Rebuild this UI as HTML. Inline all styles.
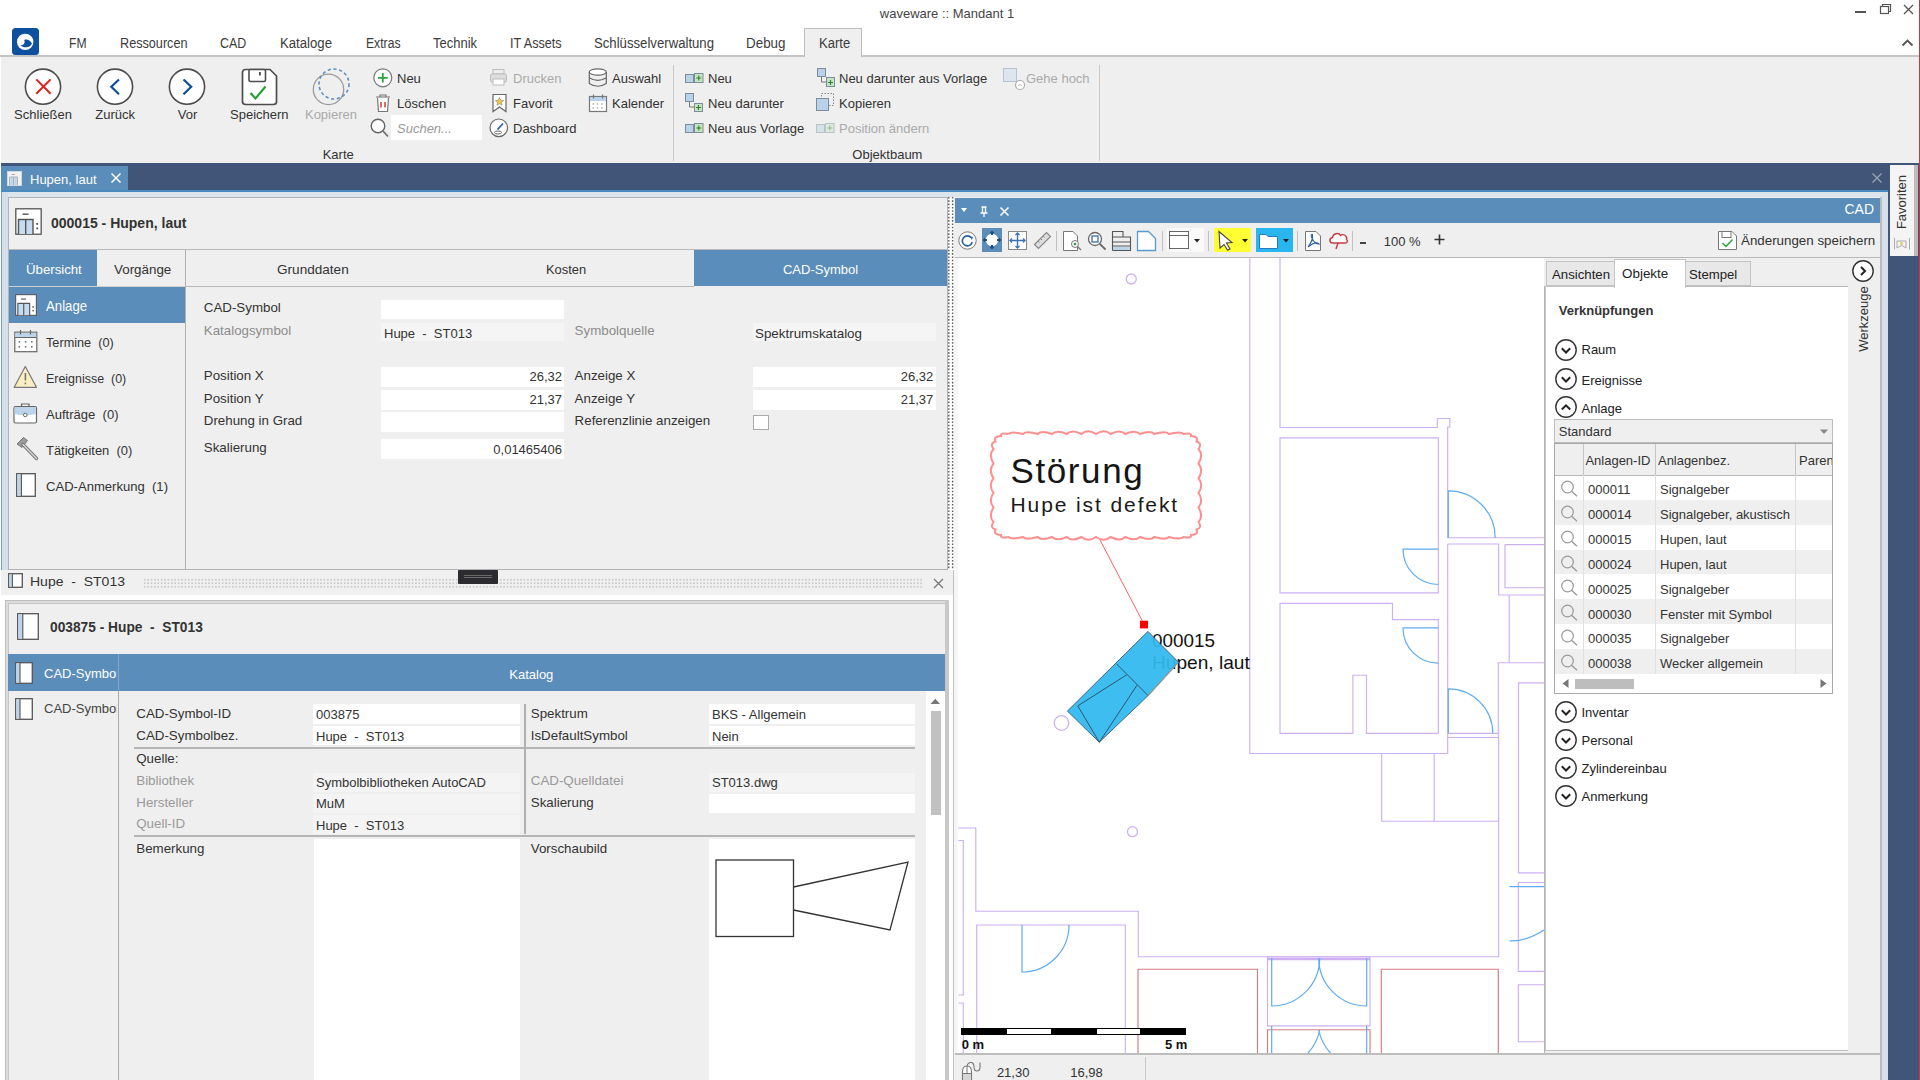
<!DOCTYPE html><html><head><meta charset="utf-8"><title>waveware</title><style>
html,body{margin:0;padding:0;}
body{width:1920px;height:1080px;overflow:hidden;position:relative;background:#fff;font-family:"Liberation Sans", sans-serif;}
.t{position:absolute;white-space:pre;}
.r{position:absolute;}
svg.r{overflow:visible;}
</style></head><body>
<div class="r" style="left:0px;top:0px;width:1920px;height:57px;background:#ffffff;"></div>
<div class="t" style="left:447.00px;top:7.20px;font-size:13px;line-height:13px;color:#444;width:1000px;text-align:center;">waveware :: Mandant 1</div>
<svg class="r" style="left:1850px;top:0px;" width="70" height="56" viewBox="0 0 70 56"><rect x="5" y="11" width="11" height="2" fill="#555"/><rect x="30.5" y="6.5" width="8" height="7" fill="none" stroke="#555" stroke-width="1.2"/><path d="M32.5 6.5 V4.5 H40.5 V11.5 H38.5" fill="none" stroke="#555" stroke-width="1.2"/><path d="M54 5 L63 14 M63 5 L54 14" stroke="#555" stroke-width="1.3"/><path d="M52.5 45.5 L57.5 40.5 L62.5 45.5" fill="none" stroke="#555" stroke-width="1.8"/></svg>
<svg class="r" style="left:12px;top:28px;" width="27" height="27" viewBox="0 0 27 27"><rect x="0" y="0" width="27" height="27" rx="3.5" fill="#0d50a0"/><circle cx="13.2" cy="13.9" r="8.2" fill="#fff"/><path d="M8.4 17.4 C11.6 17.2 13.6 15.2 12.2 12 C15.2 10.6 18.6 12.6 20 15.6 C18.6 19.4 13.2 20.6 8.4 17.4 Z" fill="#0d50a0"/></svg>
<div class="r" style="left:804px;top:28px;width:58px;height:30px;background:#efefef;"></div>
<div class="r" style="left:804px;top:28px;width:1px;height:29px;background:#bdbdbd;"></div>
<div class="r" style="left:861px;top:28px;width:1px;height:29px;background:#bdbdbd;"></div>
<div class="r" style="left:804px;top:28px;width:58px;height:1px;background:#bdbdbd;"></div>
<div class="t" style="left:68.75px;top:35.65px;font-size:14px;line-height:14px;color:#3b3b3b;transform:scaleX(0.8655);transform-origin:0 0;">FM</div>
<div class="t" style="left:120.00px;top:35.65px;font-size:14px;line-height:14px;color:#3b3b3b;transform:scaleX(0.9036);transform-origin:0 0;">Ressourcen</div>
<div class="t" style="left:220.00px;top:35.65px;font-size:14px;line-height:14px;color:#3b3b3b;transform:scaleX(0.8879);transform-origin:0 0;">CAD</div>
<div class="t" style="left:280.00px;top:35.65px;font-size:14px;line-height:14px;color:#3b3b3b;transform:scaleX(0.9406);transform-origin:0 0;">Kataloge</div>
<div class="t" style="left:365.50px;top:35.65px;font-size:14px;line-height:14px;color:#3b3b3b;transform:scaleX(0.8693);transform-origin:0 0;">Extras</div>
<div class="t" style="left:433.00px;top:35.65px;font-size:14px;line-height:14px;color:#3b3b3b;transform:scaleX(0.9269);transform-origin:0 0;">Technik</div>
<div class="t" style="left:509.50px;top:35.65px;font-size:14px;line-height:14px;color:#3b3b3b;transform:scaleX(0.8983);transform-origin:0 0;">IT Assets</div>
<div class="t" style="left:593.75px;top:35.65px;font-size:14px;line-height:14px;color:#3b3b3b;transform:scaleX(0.9403);transform-origin:0 0;">Schlüsselverwaltung</div>
<div class="t" style="left:746.00px;top:35.65px;font-size:14px;line-height:14px;color:#3b3b3b;transform:scaleX(0.9572);transform-origin:0 0;">Debug</div>
<div class="t" style="left:818.75px;top:35.65px;font-size:14px;line-height:14px;color:#3b3b3b;transform:scaleX(0.9337);transform-origin:0 0;">Karte</div>
<div class="r" style="left:0px;top:55px;width:804px;height:2px;background:#c4c4c4;"></div>
<div class="r" style="left:862px;top:55px;width:1058px;height:2px;background:#c4c4c4;"></div>
<div class="r" style="left:0px;top:57px;width:1919px;height:106px;background:#efefef;"></div>
<svg class="r" style="left:23px;top:66px;" width="40" height="42" viewBox="0 0 40 42"><circle cx="20" cy="20.7" r="17.6" fill="#fff" stroke="#4d4d4d" stroke-width="1.6"/><path d="M13.3 13.4 L27.6 27.7 M27.6 13.4 L13.3 27.7" stroke="#e0201b" stroke-width="2"/></svg>
<svg class="r" style="left:95px;top:66px;" width="40" height="42" viewBox="0 0 40 42"><circle cx="20" cy="20.7" r="17.6" fill="#fff" stroke="#4d4d4d" stroke-width="1.6"/><path d="M24 13.5 L16.3 20.8 L24 28.2" fill="none" stroke="#0d4f97" stroke-width="2.2"/></svg>
<svg class="r" style="left:167px;top:66px;" width="40" height="42" viewBox="0 0 40 42"><circle cx="20" cy="20.7" r="17.6" fill="#fff" stroke="#4d4d4d" stroke-width="1.6"/><path d="M16.5 13.5 L24.2 20.8 L16.5 28.2" fill="none" stroke="#0d4f97" stroke-width="2.2"/></svg>
<div class="t" style="left:-457.00px;top:108.40px;font-size:13px;line-height:13px;color:#333;width:1000px;text-align:center;">Schließen</div>
<div class="t" style="left:-384.80px;top:108.40px;font-size:13px;line-height:13px;color:#333;width:1000px;text-align:center;">Zurück</div>
<div class="t" style="left:-312.50px;top:108.40px;font-size:13px;line-height:13px;color:#333;width:1000px;text-align:center;">Vor</div>
<svg class="r" style="left:240px;top:67px;" width="40" height="40" viewBox="0 0 40 40"><path d="M5.5 2.5 H30 L36.5 9 V34.5 Q36.5 37.5 33.5 37.5 H5.5 Q2.5 37.5 2.5 34.5 V5.5 Q2.5 2.5 5.5 2.5 Z" fill="#fff" stroke="#4d4d4d" stroke-width="1.7"/><rect x="9" y="2.5" width="16.5" height="12" rx="1.5" fill="#fff" stroke="#4d4d4d" stroke-width="1.6"/><rect x="19" y="5" width="1.8" height="3.5" fill="#4d4d4d"/><path d="M10.5 26 L15.5 31.5 L25.5 19.5" fill="none" stroke="#1e9e2a" stroke-width="2"/></svg>
<div class="t" style="left:-240.70px;top:108.40px;font-size:13px;line-height:13px;color:#333;width:1000px;text-align:center;">Speichern</div>
<svg class="r" style="left:310px;top:66px;" width="44" height="42" viewBox="0 0 44 42"><circle cx="18.5" cy="23.4" r="15.2" fill="none" stroke="#9a9a9a" stroke-width="1.3"/><circle cx="24" cy="18" r="15" fill="none" stroke="#5d8fc2" stroke-width="1.6" stroke-dasharray="3.2 2.6"/></svg>
<div class="t" style="left:-169.00px;top:108.40px;font-size:13px;line-height:13px;color:#aaa;width:1000px;text-align:center;">Kopieren</div>
<svg class="r" style="left:372px;top:67px;" width="22" height="22" viewBox="0 0 22 22"><circle cx="10.8" cy="10.8" r="9" fill="#fff" stroke="#777" stroke-width="1.2"/><path d="M10.8 6 V15.6 M6 10.8 H15.6" stroke="#2aa43a" stroke-width="1.8"/></svg>
<div class="t" style="left:397.00px;top:71.80px;font-size:13px;line-height:13px;color:#333;">Neu</div>
<svg class="r" style="left:372px;top:92px;" width="22" height="22" viewBox="0 0 22 22"><path d="M4 5 H18 M8 5 V3 H14 V5" fill="none" stroke="#777" stroke-width="1.2"/><path d="M5.5 6 L6.5 19.5 H15.5 L16.5 6" fill="#fff" stroke="#777" stroke-width="1.2"/><path d="M9 10 V15.5 M13 10 V15.5" stroke="#d23b3b" stroke-width="1.5"/></svg>
<div class="t" style="left:397.00px;top:96.80px;font-size:13px;line-height:13px;color:#333;">Löschen</div>
<svg class="r" style="left:369px;top:117px;" width="22" height="22" viewBox="0 0 22 22"><circle cx="9" cy="9" r="6.8" fill="#fff" stroke="#666" stroke-width="1.4"/><path d="M14 14 L19 19.5" stroke="#666" stroke-width="1.6"/></svg>
<div class="r" style="left:391px;top:115px;width:91px;height:25px;background:#ffffff;"></div>
<div class="t" style="left:397.00px;top:121.90px;font-size:13px;line-height:13px;color:#999;font-style:italic;">Suchen...</div>
<div class="t" style="left:-161.80px;top:147.60px;font-size:13px;line-height:13px;color:#333;width:1000px;text-align:center;">Karte</div>
<svg class="r" style="left:488px;top:67px;" width="22" height="22" viewBox="0 0 22 22"><rect x="5" y="2.5" width="11" height="4.5" fill="#eee" stroke="#bbb"/><rect x="2.5" y="7" width="16" height="8" rx="1.5" fill="#ddd" stroke="#bbb"/><rect x="5" y="12" width="11" height="6" fill="#fff" stroke="#bbb"/></svg>
<div class="t" style="left:513.00px;top:71.80px;font-size:13px;line-height:13px;color:#aaa;">Drucken</div>
<svg class="r" style="left:489px;top:92px;" width="22" height="22" viewBox="0 0 22 22"><path d="M4 2.5 H17 V19.5 L10.5 15 L4 19.5 Z" fill="#fff" stroke="#666" stroke-width="1.2"/><path d="M10.5 5.5 L11.8 8.2 L14.7 8.5 L12.5 10.4 L13.1 13.2 L10.5 11.8 L7.9 13.2 L8.5 10.4 L6.3 8.5 L9.2 8.2 Z" fill="#f1c649" stroke="#777" stroke-width="0.5"/></svg>
<div class="t" style="left:513.00px;top:96.80px;font-size:13px;line-height:13px;color:#333;">Favorit</div>
<svg class="r" style="left:488px;top:117px;" width="22" height="22" viewBox="0 0 22 22"><circle cx="10.8" cy="10.8" r="8.8" fill="#fff" stroke="#666" stroke-width="1.2"/><path d="M9.5 12.5 L15 6.5" stroke="#2a62a5" stroke-width="1.8"/><ellipse cx="10" cy="15.5" rx="3.5" ry="1.5" fill="none" stroke="#666"/></svg>
<div class="t" style="left:513.00px;top:121.60px;font-size:13px;line-height:13px;color:#333;">Dashboard</div>
<svg class="r" style="left:587px;top:67px;" width="22" height="22" viewBox="0 0 22 22"><ellipse cx="10.8" cy="5" rx="8.5" ry="3.2" fill="#fff" stroke="#666" stroke-width="1.2"/><path d="M2.3 5 V16.5 Q10.8 22 19.3 16.5 V5 M2.3 10.8 Q10.8 16 19.3 10.8" fill="none" stroke="#666" stroke-width="1.2"/></svg>
<div class="t" style="left:612.00px;top:71.80px;font-size:13px;line-height:13px;color:#333;">Auswahl</div>
<svg class="r" style="left:587px;top:92px;" width="22" height="22" viewBox="0 0 22 22"><rect x="2.5" y="4.5" width="17" height="15" fill="#fff" stroke="#777" stroke-width="1.2"/><rect x="3" y="5" width="16" height="4" fill="#b9d3ea"/><path d="M6.5 2.5 V6.5 M15.5 2.5 V6.5" stroke="#777" stroke-width="1.2"/><path d="M5.5 12 h1.5 M9.8 12 h1.5 M14.2 12 h1.5 M5.5 16 h1.5 M9.8 16 h1.5 M14.2 16 h1.5" stroke="#888" stroke-width="1.2"/></svg>
<div class="t" style="left:612.00px;top:96.80px;font-size:13px;line-height:13px;color:#333;">Kalender</div>
<div class="r" style="left:673px;top:65px;width:1px;height:96px;background:#c8c8c8;"></div>
<svg class="r" style="left:685px;top:72px;" width="20" height="14" viewBox="0 0 20 14"><g opacity="1"><rect x="0.5" y="2.5" width="8" height="8" fill="#b8d2ea" stroke="#7c8c9c"/><rect x="9.5" y="1.5" width="8.5" height="9" fill="#c4e6c0" stroke="#7c8c9c"/><path d="M13.75 3.5 V8.5 M11.25 6 H16.25" stroke="#2f7f2f" stroke-width="1.1"/></g></svg>
<div class="t" style="left:708.00px;top:71.80px;font-size:13px;line-height:13px;color:#333;">Neu</div>
<svg class="r" style="left:685px;top:93px;" width="20" height="20" viewBox="0 0 20 20"><rect x="0.5" y="0.5" width="8" height="8" fill="#b8d2ea" stroke="#7c8c9c"/><path d="M4.5 9 V14 H9" fill="none" stroke="#777"/><rect x="9.5" y="10.5" width="8" height="8" fill="#c4e6c0" stroke="#7c8c9c"/><path d="M13.5 12 V17 M11 14.5 H16" stroke="#2f7f2f" stroke-width="1.1"/></svg>
<div class="t" style="left:708.00px;top:96.80px;font-size:13px;line-height:13px;color:#333;">Neu darunter</div>
<svg class="r" style="left:685px;top:122px;" width="20" height="14" viewBox="0 0 20 14"><g opacity="1"><rect x="0.5" y="2.5" width="8" height="8" fill="#b8d2ea" stroke="#7c8c9c"/><rect x="9.5" y="1.5" width="8.5" height="9" fill="#c4e6c0" stroke="#7c8c9c"/><path d="M13.75 3.5 V8.5 M11.25 6 H16.25" stroke="#2f7f2f" stroke-width="1.1"/></g></svg>
<div class="t" style="left:708.00px;top:121.60px;font-size:13px;line-height:13px;color:#333;">Neu aus Vorlage</div>
<svg class="r" style="left:817px;top:68px;" width="20" height="20" viewBox="0 0 20 20"><rect x="0.5" y="0.5" width="8" height="8" fill="#b8d2ea" stroke="#7c8c9c"/><path d="M4.5 9 V14 H9" fill="none" stroke="#777"/><rect x="9.5" y="9.5" width="8" height="9" fill="#c4e6c0" stroke="#7c8c9c"/><path d="M13.5 12 V17 M11 14.5 H16" stroke="#2f7f2f" stroke-width="1.1"/></svg>
<div class="t" style="left:839.00px;top:71.80px;font-size:13px;line-height:13px;color:#333;">Neu darunter aus Vorlage</div>
<svg class="r" style="left:816px;top:93px;" width="20" height="20" viewBox="0 0 20 20"><rect x="5.5" y="0.5" width="12" height="12" fill="none" stroke="#888" stroke-dasharray="1.5 1.5"/><rect x="0.5" y="5.5" width="12" height="12" fill="#b8d2ea" stroke="#7c8c9c"/></svg>
<div class="t" style="left:839.00px;top:96.80px;font-size:13px;line-height:13px;color:#333;">Kopieren</div>
<svg class="r" style="left:816px;top:122px;" width="20" height="14" viewBox="0 0 20 14"><g opacity="0.45"><rect x="0.5" y="2.5" width="8" height="8" fill="#b8d2ea" stroke="#7c8c9c"/><rect x="9.5" y="1.5" width="8.5" height="9" fill="#c4e6c0" stroke="#7c8c9c"/><path d="M13.75 3.5 V8.5 M11.25 6 H16.25" stroke="#2f7f2f" stroke-width="1.1"/></g></svg>
<div class="t" style="left:839.00px;top:121.60px;font-size:13px;line-height:13px;color:#aaa;">Position ändern</div>
<svg class="r" style="left:1003px;top:68px;" width="22" height="22" viewBox="0 0 22 22"><rect x="0.5" y="0.5" width="13" height="13" fill="#dde6ef" stroke="#b5c2cf"/><circle cx="17" cy="17" r="4.5" fill="#fff" stroke="#aaa" stroke-width="1.1"/><path d="M15.3 18 L17 16.3 L18.7 18" fill="none" stroke="#aaa"/></svg>
<div class="t" style="left:1026.00px;top:71.80px;font-size:13px;line-height:13px;color:#aaa;">Gehe hoch</div>
<div class="t" style="left:387.40px;top:147.60px;font-size:13px;line-height:13px;color:#333;width:1000px;text-align:center;">Objektbaum</div>
<div class="r" style="left:1099px;top:65px;width:1px;height:96px;background:#c8c8c8;"></div>
<div class="r" style="left:1919px;top:0px;width:1px;height:1080px;background:#d8313b;"></div>
<div class="r" style="left:0px;top:163px;width:1919px;height:27px;background:#405578;"></div>
<div class="r" style="left:1px;top:166px;width:127px;height:24px;background:#5a8dba;"></div>
<svg class="r" style="left:7px;top:171px;" width="15" height="15" viewBox="0 0 15 15"><rect x="0.5" y="0.5" width="14" height="14" fill="#f2f2f2" stroke="#cfd8e0"/><path d="M2.5 14 V6 H10.5 V14 M6.5 6 V14" fill="#c5d6e6" stroke="#a9b4bf"/><rect x="4.5" y="3" width="3.5" height="1" fill="#aab"/></svg>
<div class="t" style="left:30.00px;top:172.50px;font-size:13px;line-height:13px;color:#ffffff;">Hupen, laut</div>
<svg class="r" style="left:110px;top:172px;" width="12" height="12" viewBox="0 0 12 12"><path d="M1.5 1.5 L10.5 10.5 M10.5 1.5 L1.5 10.5" stroke="#fff" stroke-width="1.5"/></svg>
<svg class="r" style="left:1872px;top:173px;" width="10" height="10" viewBox="0 0 10 10"><path d="M0.5 0.5 L9.5 9.5 M9.5 0.5 L0.5 9.5" stroke="#9aa3b0" stroke-width="1.3"/></svg>
<div class="r" style="left:0px;top:190px;width:1889px;height:2px;background:#4a8bc0;"></div>
<div class="r" style="left:0px;top:192px;width:1889px;height:378px;background:#dde5ec;"></div>
<div class="r" style="left:0px;top:570px;width:954px;height:510px;background:#ffffff;"></div>
<div class="r" style="left:1px;top:192px;width:1px;height:378px;background:#7f9cc0;"></div>
<div class="r" style="left:2px;top:192px;width:6px;height:378px;background:#d3e0ec;"></div>
<div class="r" style="left:8px;top:197px;width:940px;height:373px;background:#efefef;box-sizing:border-box;border:1px solid #b3b3b3;"></div>
<svg class="r" style="left:15px;top:208px;" width="27" height="27" viewBox="0 0 27 27"><g transform="scale(1.0)"><rect x="0.8" y="0.8" width="25.4" height="25.4" fill="#fff" stroke="#555" stroke-width="1.3"/><rect x="7.5" y="5.5" width="6" height="1.4" fill="#555"/><path d="M3.5 26 V11.5 H18 V26" fill="#c5dbef" stroke="#555" stroke-width="1.4"/><path d="M10.7 11.5 V26" stroke="#555" stroke-width="1.4"/><rect x="21.3" y="15" width="1.8" height="1.8" fill="#555"/><rect x="21.3" y="19.5" width="1.8" height="1.8" fill="#555"/></g></svg>
<div class="t" style="left:51.00px;top:215.75px;font-size:14px;line-height:14px;color:#333333;font-weight:700;">000015 - Hupen, laut</div>
<div class="r" style="left:9px;top:249px;width:938px;height:1px;background:#b9b9b9;"></div>
<div class="r" style="left:9px;top:250px;width:88px;height:36px;background:#5a8dba;"></div>
<div class="t" style="left:26.00px;top:262.50px;font-size:13px;line-height:13px;color:#fff;transform:scaleX(1.016);transform-origin:0 0;">Übersicht</div>
<div class="t" style="left:113.50px;top:262.50px;font-size:13px;line-height:13px;color:#333;transform:scaleX(1.0292);transform-origin:0 0;">Vorgänge</div>
<div class="r" style="left:185px;top:250px;width:1px;height:319px;background:#b0b0b0;"></div>
<div class="t" style="left:277.00px;top:262.50px;font-size:13px;line-height:13px;color:#333;transform:scaleX(1.0441);transform-origin:0 0;">Grunddaten</div>
<div class="t" style="left:545.60px;top:262.50px;font-size:13px;line-height:13px;color:#333;transform:scaleX(0.993);transform-origin:0 0;">Kosten</div>
<div class="r" style="left:694px;top:250px;width:253px;height:36px;background:#5a8dba;"></div>
<div class="t" style="left:320.50px;top:262.50px;font-size:13px;line-height:13px;color:#fff;width:1000px;text-align:center;">CAD-Symbol</div>
<div class="r" style="left:9px;top:286px;width:685px;height:1px;background:#b9b9b9;"></div>
<div class="r" style="left:9px;top:286px;width:176px;height:1px;background:#d0d0d0;"></div>
<div class="r" style="left:9px;top:287px;width:176px;height:36px;background:#5a8dba;"></div>
<svg class="r" style="left:15px;top:294px;" width="22" height="22" viewBox="0 0 22 22"><g transform="scale(0.8148148148148148)"><rect x="0.8" y="0.8" width="25.4" height="25.4" fill="#fff" stroke="#555" stroke-width="1.3"/><rect x="7.5" y="5.5" width="6" height="1.4" fill="#555"/><path d="M3.5 26 V11.5 H18 V26" fill="#c5dbef" stroke="#555" stroke-width="1.4"/><path d="M10.7 11.5 V26" stroke="#555" stroke-width="1.4"/><rect x="21.3" y="15" width="1.8" height="1.8" fill="#555"/><rect x="21.3" y="19.5" width="1.8" height="1.8" fill="#555"/></g></svg>
<div class="t" style="left:46.40px;top:298.95px;font-size:14px;line-height:14px;color:#fff;transform:scaleX(0.9428);transform-origin:0 0;">Anlage</div>
<svg class="r" style="left:14px;top:329px;" width="24" height="24" viewBox="0 0 24 24"><rect x="0.8" y="3.2" width="22" height="19.5" fill="#fff" stroke="#666" stroke-width="1.2"/><rect x="1.4" y="3.8" width="20.8" height="4.5" fill="#bcd4ea"/><path d="M1 8.5 H22.5" stroke="#666"/><path d="M6.5 1 V5.5 M16.5 1 V5.5" stroke="#666" stroke-width="1.2"/><g fill="#777"><rect x="4.5" y="12" width="1.6" height="1.6"/><rect x="10.8" y="12" width="1.6" height="1.6"/><rect x="17" y="12" width="1.6" height="1.6"/><rect x="4.5" y="17" width="1.6" height="1.6"/><rect x="10.8" y="17" width="1.6" height="1.6"/><rect x="17" y="17" width="1.6" height="1.6"/></g></svg>
<div class="t" style="left:45.80px;top:335.60px;font-size:13px;line-height:13px;color:#333;transform:scaleX(0.9761);transform-origin:0 0;">Termine  (0)</div>
<svg class="r" style="left:13px;top:365px;" width="25" height="25" viewBox="0 0 25 25"><path d="M12.3 1.5 L23.5 22.3 H1.2 Z" fill="#fbefc1" stroke="#777" stroke-width="1.2" stroke-linejoin="round"/><rect x="11.6" y="8" width="1.6" height="7.5" fill="#777"/><rect x="11.6" y="17.5" width="1.6" height="1.8" fill="#777"/></svg>
<div class="t" style="left:45.80px;top:371.50px;font-size:13px;line-height:13px;color:#333;transform:scaleX(0.9569);transform-origin:0 0;">Ereignisse  (0)</div>
<svg class="r" style="left:13px;top:402px;" width="25" height="22" viewBox="0 0 25 22"><rect x="1" y="4.5" width="22.5" height="16.5" rx="1.5" fill="#fff" stroke="#666" stroke-width="1.2"/><path d="M1.6 5.1 H22.9 V12 Q12 14.5 1.6 12 Z" fill="#bcd4ea"/><path d="M8.5 4.5 V2 H16 V4.5" fill="none" stroke="#666" stroke-width="1.2"/><circle cx="12.3" cy="13" r="1.8" fill="#fff" stroke="#666"/></svg>
<div class="t" style="left:45.50px;top:407.50px;font-size:13px;line-height:13px;color:#333;transform:scaleX(1.0032);transform-origin:0 0;">Aufträge  (0)</div>
<svg class="r" style="left:13px;top:436px;" width="26" height="26" viewBox="0 0 26 26"><path d="M4 8 L10.5 1.5 L14.5 4.5 L9 11.5 Z" fill="#9b9b9b" stroke="#777"/><path d="M10 8.5 L23.5 22.5" stroke="#777" stroke-width="3.3" stroke-linecap="round"/><path d="M10 8.5 L23.5 22.5" stroke="#ddd" stroke-width="1.2" stroke-linecap="round"/></svg>
<div class="t" style="left:45.50px;top:443.50px;font-size:13px;line-height:13px;color:#333;transform:scaleX(0.9948);transform-origin:0 0;">Tätigkeiten  (0)</div>
<svg class="r" style="left:16px;top:473px;" width="20" height="24" viewBox="0 0 20 24"><rect x="0.7" y="0.7" width="18.6" height="22.6" fill="#fff" stroke="#555" stroke-width="1.3"/><rect x="1.4" y="1.4" width="4.0" height="21.2" fill="#bdd5ec"/><path d="M5.4 1 V23" stroke="#555" stroke-width="1.1"/></svg>
<div class="t" style="left:45.50px;top:479.50px;font-size:13px;line-height:13px;color:#333;transform:scaleX(1.0051);transform-origin:0 0;">CAD-Anmerkung  (1)</div>
<div class="t" style="left:203.75px;top:301.42px;font-size:13.33px;line-height:13.33px;color:#333333;">CAD-Symbol</div>
<div class="r" style="left:381px;top:300px;width:183px;height:19px;background:#fff;"></div>
<div class="t" style="left:203.75px;top:323.72px;font-size:13.33px;line-height:13.33px;color:#8c8c8c;">Katalogsymbol</div>
<div class="r" style="left:381px;top:323px;width:183px;height:18px;background:#f5f5f5;"></div>
<div class="t" style="left:384.00px;top:327.00px;font-size:13px;line-height:13px;color:#333;">Hupe  -  ST013</div>
<div class="t" style="left:574.60px;top:323.72px;font-size:13.33px;line-height:13.33px;color:#8c8c8c;">Symbolquelle</div>
<div class="r" style="left:753px;top:323px;width:183px;height:18px;background:#f5f5f5;"></div>
<div class="t" style="left:754.80px;top:327.00px;font-size:13px;line-height:13px;color:#333;transform:scaleX(1.0282);transform-origin:0 0;">Spektrumskatalog</div>
<div class="t" style="left:203.75px;top:369.12px;font-size:13.33px;line-height:13.33px;color:#333333;">Position X</div>
<div class="r" style="left:381px;top:367px;width:183px;height:20px;background:#fff;"></div>
<div class="t" style="left:-438.00px;top:370.30px;font-size:13px;line-height:13px;color:#333;width:1000px;text-align:right;">26,32</div>
<div class="t" style="left:203.75px;top:391.72px;font-size:13.33px;line-height:13.33px;color:#333333;">Position Y</div>
<div class="r" style="left:381px;top:390px;width:183px;height:20px;background:#fff;"></div>
<div class="t" style="left:-438.00px;top:392.90px;font-size:13px;line-height:13px;color:#333;width:1000px;text-align:right;">21,37</div>
<div class="t" style="left:203.75px;top:414.32px;font-size:13.33px;line-height:13.33px;color:#333333;">Drehung in Grad</div>
<div class="r" style="left:381px;top:412px;width:183px;height:20px;background:#fff;"></div>
<div class="t" style="left:203.75px;top:441.42px;font-size:13.33px;line-height:13.33px;color:#333333;">Skalierung</div>
<div class="r" style="left:381px;top:439px;width:183px;height:20px;background:#fff;"></div>
<div class="t" style="left:-438.00px;top:442.60px;font-size:13px;line-height:13px;color:#333;width:1000px;text-align:right;">0,01465406</div>
<div class="t" style="left:574.60px;top:369.12px;font-size:13.33px;line-height:13.33px;color:#333333;">Anzeige X</div>
<div class="r" style="left:753px;top:367px;width:183px;height:20px;background:#fff;"></div>
<div class="t" style="left:-66.70px;top:370.30px;font-size:13px;line-height:13px;color:#333;width:1000px;text-align:right;">26,32</div>
<div class="t" style="left:574.60px;top:391.72px;font-size:13.33px;line-height:13.33px;color:#333333;">Anzeige Y</div>
<div class="r" style="left:753px;top:390px;width:183px;height:20px;background:#fff;"></div>
<div class="t" style="left:-66.70px;top:392.90px;font-size:13px;line-height:13px;color:#333;width:1000px;text-align:right;">21,37</div>
<div class="t" style="left:574.60px;top:414.32px;font-size:13.33px;line-height:13.33px;color:#333333;">Referenzlinie anzeigen</div>
<div class="r" style="left:753px;top:415px;width:16px;height:15px;background:#fff;box-sizing:border-box;border:1px solid #aaa;"></div>
<div class="r" style="left:948px;top:197px;width:6px;height:373px;background:#ffffff;"></div>
<svg class="r" style="left:946px;top:197px;" width="10" height="373" viewBox="0 0 10 373"><path d="M2.8 0 V373 M6.6 0 V373" stroke="#5c5c5c" stroke-width="1.4" stroke-dasharray="1.6 1.7"/></svg>
<div class="r" style="left:1px;top:570px;width:952px;height:25px;background:#f0f0f0;"></div>
<div class="r" style="left:8px;top:569px;width:940px;height:1px;background:#b3b3b3;"></div>
<svg class="r" style="left:8px;top:573px;" width="15" height="15" viewBox="0 0 15 15"><rect x="0.7" y="0.7" width="13.6" height="13.6" fill="#fff" stroke="#555" stroke-width="1.3"/><rect x="1.4" y="1.4" width="3.0" height="12.2" fill="#bdd5ec"/><path d="M4.4 1 V14" stroke="#555" stroke-width="1.1"/></svg>
<div class="t" style="left:30.40px;top:575.40px;font-size:13px;line-height:13px;color:#333;transform:scaleX(1.0776);transform-origin:0 0;">Hupe  -  ST013</div>
<div class="r" style="left:143px;top:578px;width:780px;height:10.5px;background-image:radial-gradient(#c4c4c4 0.55px, transparent 0.9px);background-size:3.4px 3.5px;"></div>
<div class="r" style="left:458px;top:570px;width:40px;height:14px;background:#2b2b30;border-radius:1px;"></div>
<div class="r" style="left:464px;top:575px;width:28px;height:1px;background:#6a6a6a;"></div>
<div class="r" style="left:464px;top:577px;width:28px;height:1px;background:#6a6a6a;"></div>
<svg class="r" style="left:933px;top:578px;" width="11" height="11" viewBox="0 0 11 11"><path d="M1 1 L10 10 M10 1 L1 10" stroke="#777" stroke-width="1.3"/></svg>
<div class="r" style="left:1px;top:595px;width:952px;height:5px;background:#ffffff;"></div>
<div class="r" style="left:953px;top:570px;width:2px;height:510px;background:#c0c0c0;"></div>
<div class="r" style="left:5px;top:600px;width:944px;height:480px;background:#efefef;"></div>
<div class="r" style="left:5px;top:600px;width:1px;height:480px;background:#bdbdbd;"></div>
<div class="r" style="left:8px;top:603px;width:1px;height:477px;background:#c6c6c6;"></div>
<div class="r" style="left:6px;top:601px;width:2px;height:479px;background:#dcdcdc;"></div>
<div class="r" style="left:5px;top:600px;width:944px;height:1px;background:#bdbdbd;"></div>
<div class="r" style="left:8px;top:603px;width:940px;height:1px;background:#c6c6c6;"></div>
<div class="r" style="left:6px;top:601px;width:942px;height:2px;background:#dcdcdc;"></div>
<svg class="r" style="left:17px;top:613px;" width="22" height="27" viewBox="0 0 22 27"><rect x="0.7" y="0.7" width="20.6" height="25.6" fill="#fff" stroke="#555" stroke-width="1.3"/><rect x="1.4" y="1.4" width="4.4" height="24.2" fill="#bdd5ec"/><path d="M5.8 1 V26" stroke="#555" stroke-width="1.1"/></svg>
<div class="t" style="left:50.40px;top:620.05px;font-size:14px;line-height:14px;color:#333333;font-weight:700;transform:scaleX(0.9817);transform-origin:0 0;">003875 - Hupe  -  ST013</div>
<div class="r" style="left:8px;top:654px;width:937px;height:37px;background:#5a8dba;"></div>
<div class="r" style="left:118px;top:654px;width:1px;height:37px;background:#7fa6c9;"></div>
<svg class="r" style="left:15px;top:662px;" width="18" height="22" viewBox="0 0 18 22"><rect x="0.7" y="0.7" width="16.6" height="20.6" fill="#fff" stroke="#555" stroke-width="1.3"/><rect x="1.4" y="1.4" width="3.6" height="19.2" fill="#bdd5ec"/><path d="M5.0 1 V21" stroke="#555" stroke-width="1.1"/></svg>
<div class="r" style="left:44px;top:660px;width:73px;height:26px;overflow:hidden;"><div class="t" style="left:0;top:6.5px;font-size:13px;line-height:14px;color:#fff;">CAD-Symbol</div></div>
<div class="t" style="left:31.30px;top:668.40px;font-size:13px;line-height:13px;color:#fff;width:1000px;text-align:center;">Katalog</div>
<svg class="r" style="left:15px;top:698px;" width="18" height="22" viewBox="0 0 18 22"><rect x="0.7" y="0.7" width="16.6" height="20.6" fill="#fff" stroke="#555" stroke-width="1.3"/><rect x="1.4" y="1.4" width="3.6" height="19.2" fill="#bdd5ec"/><path d="M5.0 1 V21" stroke="#555" stroke-width="1.1"/></svg>
<div class="r" style="left:44px;top:695px;width:73px;height:26px;overflow:hidden;"><div class="t" style="left:0;top:7px;font-size:13px;line-height:14px;color:#444;">CAD-Symbol</div></div>
<div class="r" style="left:118px;top:691px;width:1px;height:389px;background:#a9a9a9;"></div>
<div class="t" style="left:136.25px;top:706.72px;font-size:13.33px;line-height:13.33px;color:#333333;">CAD-Symbol-ID</div>
<div class="r" style="left:313px;top:704px;width:207px;height:20px;background:#fff;"></div>
<div class="t" style="left:316.00px;top:708.00px;font-size:13px;line-height:13px;color:#333;">003875</div>
<div class="t" style="left:136.25px;top:728.62px;font-size:13.33px;line-height:13.33px;color:#333333;">CAD-Symbolbez.</div>
<div class="r" style="left:313px;top:726px;width:207px;height:19px;background:#fff;"></div>
<div class="t" style="left:316.00px;top:730.00px;font-size:13px;line-height:13px;color:#333;">Hupe  -  ST013</div>
<div class="r" style="left:134px;top:747px;width:781px;height:2px;background:#b5b5b5;"></div>
<div class="t" style="left:136.25px;top:751.52px;font-size:13.33px;line-height:13.33px;color:#333333;">Quelle:</div>
<div class="t" style="left:136.25px;top:774.32px;font-size:13.33px;line-height:13.33px;color:#999;">Bibliothek</div>
<div class="r" style="left:313px;top:773px;width:207px;height:19px;background:#f4f4f4;"></div>
<div class="t" style="left:316.00px;top:776.00px;font-size:13px;line-height:13px;color:#333;">Symbolbibliotheken AutoCAD</div>
<div class="t" style="left:136.25px;top:795.72px;font-size:13.33px;line-height:13.33px;color:#999;">Hersteller</div>
<div class="r" style="left:313px;top:794px;width:207px;height:19px;background:#f4f4f4;"></div>
<div class="t" style="left:316.00px;top:797.00px;font-size:13px;line-height:13px;color:#333;">MuM</div>
<div class="t" style="left:136.25px;top:817.02px;font-size:13.33px;line-height:13.33px;color:#999;">Quell-ID</div>
<div class="r" style="left:313px;top:815px;width:207px;height:19px;background:#f4f4f4;"></div>
<div class="t" style="left:316.00px;top:818.50px;font-size:13px;line-height:13px;color:#333;">Hupe  -  ST013</div>
<div class="r" style="left:134px;top:835px;width:781px;height:2px;background:#b5b5b5;"></div>
<div class="t" style="left:136.25px;top:841.72px;font-size:13.33px;line-height:13.33px;color:#333333;">Bemerkung</div>
<div class="r" style="left:314px;top:839px;width:206px;height:241px;background:#fff;"></div>
<div class="r" style="left:524px;top:704px;width:2px;height:130px;background:#b0b0b0;"></div>
<div class="t" style="left:530.75px;top:706.72px;font-size:13.33px;line-height:13.33px;color:#333333;">Spektrum</div>
<div class="r" style="left:709px;top:704px;width:206px;height:20px;background:#fff;"></div>
<div class="t" style="left:712.00px;top:708.00px;font-size:13px;line-height:13px;color:#333;">BKS - Allgemein</div>
<div class="t" style="left:530.75px;top:728.62px;font-size:13.33px;line-height:13.33px;color:#333333;">IsDefaultSymbol</div>
<div class="r" style="left:709px;top:726px;width:206px;height:19px;background:#fff;"></div>
<div class="t" style="left:712.00px;top:730.00px;font-size:13px;line-height:13px;color:#333;">Nein</div>
<div class="t" style="left:530.75px;top:774.32px;font-size:13.33px;line-height:13.33px;color:#999;">CAD-Quelldatei</div>
<div class="r" style="left:709px;top:773px;width:206px;height:19px;background:#f4f4f4;"></div>
<div class="t" style="left:712.00px;top:776.00px;font-size:13px;line-height:13px;color:#333;">ST013.dwg</div>
<div class="t" style="left:530.75px;top:795.72px;font-size:13.33px;line-height:13.33px;color:#333333;">Skalierung</div>
<div class="r" style="left:709px;top:794px;width:206px;height:19px;background:#fff;"></div>
<div class="t" style="left:530.75px;top:841.72px;font-size:13.33px;line-height:13.33px;color:#333333;">Vorschaubild</div>
<div class="r" style="left:709px;top:839px;width:206px;height:241px;background:#fff;"></div>
<svg class="r" style="left:709px;top:839px;" width="206" height="120" viewBox="0 0 206 120"><rect x="7" y="21" width="77.5" height="76.5" fill="none" stroke="#333" stroke-width="1.3"/><path d="M84.5 48 L199 23 L181 91 L84.5 71" fill="none" stroke="#333" stroke-width="1.3"/></svg>
<div class="r" style="left:926px;top:691px;width:19px;height:389px;background:#fff;"></div>
<svg class="r" style="left:930px;top:698px;" width="11" height="7" viewBox="0 0 11 7"><path d="M0.5 6 L5.25 0.8 L10 6 Z" fill="#777"/></svg>
<div class="r" style="left:931px;top:711px;width:10px;height:104px;background:#c1c1c1;"></div>
<div class="r" style="left:945px;top:600px;width:4px;height:480px;background:#c8c8c8;"></div>
<div class="r" style="left:954px;top:197px;width:928px;height:883px;background:#efefef;"></div>
<div class="r" style="left:1880px;top:197px;width:2px;height:883px;background:#bdbdbd;"></div>
<div class="r" style="left:955px;top:198px;width:925px;height:25px;background:#5a8dba;"></div>
<div class="t" style="left:874.00px;top:202.05px;font-size:14px;line-height:14px;color:#fff;width:1000px;text-align:right;">CAD</div>
<svg class="r" style="left:958px;top:203px;" width="60" height="16" viewBox="0 0 60 16"><path d="M3 5 L9 5 L6 9 Z" fill="#fff"/><path d="M23.5 4 H28.5 M24.5 4 V10 H27.5 V4 M22.5 10 H29.5 M26 10 V14" fill="none" stroke="#fff" stroke-width="1.3"/><path d="M42.5 4.5 L50.5 12.5 M50.5 4.5 L42.5 12.5" stroke="#fff" stroke-width="1.6"/></svg>
<div class="r" style="left:955px;top:257px;width:925px;height:1px;background:#b9b9b9;"></div>
<svg class="r" style="left:958px;top:231px;" width="20" height="20" viewBox="0 0 20 20"><circle cx="9.5" cy="9.5" r="8.7" fill="#fff" stroke="#777" stroke-width="1"/><path d="M13.3 6.8 A5 5 0 1 0 14.2 11" fill="none" stroke="#2a62a5" stroke-width="1.6"/><path d="M11.8 5.2 L15 6 L13.8 9" fill="#2a62a5"/></svg>
<div class="r" style="left:982px;top:228px;width:20px;height:24px;background:#5a8dba;"></div>
<svg class="r" style="left:982px;top:228px;" width="20" height="24" viewBox="0 0 20 24"><circle cx="10" cy="12" r="6.2" fill="#fff"/><path d="M10 3.5 V7 M10 17 V20.5 M1.5 12 H5 M15 12 H18.5" stroke="#2b4e77" stroke-width="2"/><path d="M8 5 L10 3 L12 5 M8 19 L10 21 L12 19 M3 10 L1 12 L3 14 M17 10 L19 12 L17 14" fill="#2b4e77" stroke="#2b4e77"/></svg>
<svg class="r" style="left:1008px;top:231px;" width="19" height="19" viewBox="0 0 19 19"><rect x="0.5" y="0.5" width="18" height="18" fill="#fff" stroke="#888"/><path d="M9.5 2 V17 M2 9.5 H17" stroke="#3a73b5" stroke-width="1.4"/><path d="M7.5 4 L9.5 2 L11.5 4 M7.5 15 L9.5 17 L11.5 15 M4 7.5 L2 9.5 L4 11.5 M15 7.5 L17 9.5 L15 11.5" fill="none" stroke="#3a73b5" stroke-width="1.3"/></svg>
<svg class="r" style="left:1033px;top:231px;" width="19" height="19" viewBox="0 0 19 19"><path d="M1.5 13.5 L13.5 1.5 L17.5 5.5 L5.5 17.5 Z" fill="#ddd" stroke="#888" stroke-width="1.2"/><path d="M5 10 L6.5 11.5 M7.5 7.5 L9 9 M10 5 L11.5 6.5" stroke="#888"/></svg>
<div class="r" style="left:1056px;top:231px;width:1px;height:20px;background:#c0c0c0;"></div>
<svg class="r" style="left:1063px;top:231px;" width="19" height="20" viewBox="0 0 19 20"><path d="M0.5 0.5 H10 L14.5 5 V19.5 H0.5 Z" fill="#fff" stroke="#777"/><circle cx="12" cy="13" r="3.5" fill="#fff" stroke="#777"/><circle cx="12" cy="13" r="1.3" fill="#2a9a3a"/><path d="M14.5 15.5 L18 19" stroke="#777" stroke-width="1.3"/></svg>
<svg class="r" style="left:1087px;top:231px;" width="20" height="20" viewBox="0 0 20 20"><circle cx="8" cy="8" r="6.5" fill="#fff" stroke="#666" stroke-width="1.3"/><rect x="5" y="5" width="6" height="6" fill="none" stroke="#2a62a5" stroke-width="1.2"/><path d="M12.8 12.8 L18.5 18.5" stroke="#666" stroke-width="1.8"/></svg>
<svg class="r" style="left:1112px;top:231px;" width="20" height="20" viewBox="0 0 20 20"><path d="M0.5 19.5 V0.5 H11 V6 M0.5 6 H18.5 V19.5 H0.5 M0.5 11 H18.5 M0.5 15 H18.5" fill="none" stroke="#555" stroke-width="1.1"/><rect x="1" y="16" width="17" height="3" fill="#bcd4ea"/></svg>
<svg class="r" style="left:1137px;top:231px;" width="20" height="20" viewBox="0 0 20 20"><path d="M0.5 19.5 V0.5 H11.5 L18.5 7.5 V19.5 Z" fill="#fff" stroke="#5a9ad0" stroke-width="1.3"/></svg>
<div class="r" style="left:1162px;top:231px;width:1px;height:20px;background:#c0c0c0;"></div>
<div class="r" style="left:1167px;top:228px;width:37px;height:24px;background:#fafafa;"></div>
<svg class="r" style="left:1169px;top:231px;" width="34" height="19" viewBox="0 0 34 19"><rect x="0.5" y="0.5" width="19" height="17" fill="#fff" stroke="#666"/><path d="M0.5 4.5 H19.5" stroke="#666"/><path d="M25 8 H31 L28 11.5 Z" fill="#222"/></svg>
<div class="r" style="left:1208px;top:231px;width:1px;height:20px;background:#c0c0c0;"></div>
<div class="r" style="left:1214px;top:228px;width:37px;height:24px;background:#ffff33;"></div>
<svg class="r" style="left:1216px;top:230px;" width="34" height="21" viewBox="0 0 34 21"><path d="M3 1.5 L16 12.5 L10.5 13 L14 19 L11.5 20 L8 14.5 L4 18 Z" fill="#fff" stroke="#444" stroke-width="1.1"/><path d="M26 9 H32 L29 12.5 Z" fill="#222"/></svg>
<div class="r" style="left:1256px;top:228px;width:37px;height:24px;background:#29b5ee;"></div>
<svg class="r" style="left:1258px;top:230px;" width="34" height="21" viewBox="0 0 34 21"><path d="M1.5 4.5 H8 L10 6.5 H19.5 V18.5 H1.5 Z" fill="#fff" stroke="#2a7bc0" stroke-width="1"/><path d="M25 9 H31 L28 12.5 Z" fill="#222"/></svg>
<div class="r" style="left:1297px;top:231px;width:1px;height:20px;background:#c0c0c0;"></div>
<svg class="r" style="left:1305px;top:231px;" width="17" height="20" viewBox="0 0 17 20"><path d="M0.5 0.5 H11 L15.5 5 V19.5 H0.5 Z" fill="#fff" stroke="#777"/><path d="M3 16 C6 12 8 7 7.5 4 C7 2.5 5.5 3.5 6.5 6 C8 10 11 13 14 13 C12 11 8 12 3 16" fill="none" stroke="#2a62a5" stroke-width="1.1"/></svg>
<svg class="r" style="left:1328px;top:231px;" width="21" height="20" viewBox="0 0 21 20"><path d="M5 12 C1 12 1 7 4.5 6.5 C5 2 11 1.5 12.5 4.5 C15 2.5 19.5 4.5 18.5 8.5 C20.5 10 19 12.5 16.5 12 Z" fill="#fff" stroke="#c8383f" stroke-width="1.4"/><path d="M10 12 L8 18" stroke="#c8383f" stroke-width="1.4"/></svg>
<div class="r" style="left:1352px;top:231px;width:1px;height:20px;background:#c0c0c0;"></div>
<div class="r" style="left:1360px;top:242px;width:6px;height:2px;background:#444;"></div>
<div class="t" style="left:1383.70px;top:234.70px;font-size:13px;line-height:13px;color:#333;">100 %</div>
<svg class="r" style="left:1434px;top:234px;" width="11" height="11" viewBox="0 0 11 11"><path d="M5.5 0.5 V10.5 M0.5 5.5 H10.5" stroke="#333" stroke-width="1.6"/></svg>
<svg class="r" style="left:1717px;top:230px;" width="21" height="21" viewBox="0 0 21 21"><path d="M1.5 1.5 H15 L19.5 6 V19.5 H1.5 Z" fill="#fff" stroke="#777"/><rect x="5" y="1.5" width="9" height="6" fill="#fff" stroke="#777"/><path d="M5.5 13 L9 16.5 L15.5 9.5" fill="none" stroke="#2aa43a" stroke-width="1.5"/></svg>
<div class="t" style="left:1741.25px;top:234.00px;font-size:13px;line-height:13px;color:#333;transform:scaleX(1.0262);transform-origin:0 0;">Änderungen speichern</div>
<div class="r" style="left:958px;top:258px;width:586px;height:795px;background:#ffffff;"></div>
<div class="r" style="left:954px;top:258px;width:4px;height:795px;background:#f6f6f6;"></div>
<div class="r" style="left:955px;top:1053px;width:925px;height:2px;background:#bdbdbd;"></div>
<svg class="r" style="left:0;top:0;" width="1920" height="1080" viewBox="0 0 1920 1080"><defs><clipPath id="dr"><rect x="958" y="258" width="586" height="795"/></clipPath></defs><g clip-path="url(#dr)"><path d="M1249.8 258 V753.5 H1447.7 V737.5 H1498.7 V956.7 H1138.3 V911.2 H975.8 V828 H958.3" fill="none" stroke="#cdb0f2" stroke-width="1.15"/><path d="M1280 258 V427.5 H1437.3 V418.5 H1449.8 V427 H1447.7 V537.7 H1544" fill="none" stroke="#cdb0f2" stroke-width="1.15"/><path d="M1447.7 544 V737.5" fill="none" stroke="#cdb0f2" stroke-width="1.15"/><path d="M1447.7 733.3 H1498.7" fill="none" stroke="#cdb0f2" stroke-width="1.15"/><path d="M1447.7 544 H1498.7 V595 H1544" fill="none" stroke="#cdb0f2" stroke-width="1.15"/><path d="M1544 544.6 H1505 V587.7 H1544" fill="none" stroke="#cdb0f2" stroke-width="1.15"/><path d="M1509.2 595 V662.7" fill="none" stroke="#cdb0f2" stroke-width="1.15"/><path d="M1544 662.7 H1498.3 V737.5" fill="none" stroke="#cdb0f2" stroke-width="1.15"/><path d="M1544 682.9 H1518.5 V872.9 H1544" fill="none" stroke="#cdb0f2" stroke-width="1.15"/><path d="M1544 882.5 H1518.3 V971.3 H1544" fill="none" stroke="#cdb0f2" stroke-width="1.15"/><path d="M1544 984.7 H1518.3 V1041.7 H1544" fill="none" stroke="#cdb0f2" stroke-width="1.15"/><path d="M1280 437.9 H1438.3 V592.9 H1280 Z" fill="none" stroke="#cdb0f2" stroke-width="1.15"/><path d="M1280 603.3 H1392.5 V619.6 H1438.3 V733.3 H1366.5 V675.2 H1352.9 V733.3 H1280 Z" fill="none" stroke="#cdb0f2" stroke-width="1.15"/><path d="M1381.7 753.5 V821.25 H1498.7 M1434.2 753.5 V821.25" fill="none" stroke="#cdb0f2" stroke-width="1.15"/><path d="M958.3 840.5 H963.3 V995 H958.3 M958.3 1003 H963.3 V1053" fill="none" stroke="#cdb0f2" stroke-width="1.15"/><path d="M976.7 1053 V925 H1125.3 V1053" fill="none" stroke="#cdb0f2" stroke-width="1.15"/><path d="M1267.5 1025.8 V956.7 H1370 V1025.8 Z" fill="none" stroke="#cdb0f2" stroke-width="1.15"/><path d="M1267.5 959 H1370" fill="none" stroke="#cdb0f2" stroke-width="2.5"/><circle cx="1131.25" cy="279" r="5" fill="none" stroke="#cdb0f2" stroke-width="1.3"/><circle cx="1061.5" cy="723" r="7.3" fill="none" stroke="#cdb0f2" stroke-width="1.3"/><circle cx="1132.5" cy="831.7" r="5" fill="none" stroke="#cdb0f2" stroke-width="1.3"/><path d="M1138 1053 V969.2 H1257.5 V1053" fill="none" stroke="#d87982" stroke-width="1.15"/><path d="M1381.3 1053 V969.2 H1498.3 V1053" fill="none" stroke="#d87982" stroke-width="1.15"/><path d="M1267.5 1053 V1029.7 H1370 V1053" fill="none" stroke="#d87982" stroke-width="1.15"/><path d="M1448.3 537.7 V490.8 A46.9 46.9 0 0 1 1495.2 537.7" fill="none" stroke="#5eacf2" stroke-width="1.2"/><path d="M1438.3 549.2 H1403 A35.3 35.3 0 0 0 1438.3 584.5" fill="none" stroke="#5eacf2" stroke-width="1.2"/><path d="M1438.3 627.9 H1403 A35.3 35.3 0 0 0 1438.3 663.2" fill="none" stroke="#5eacf2" stroke-width="1.2"/><path d="M1448.3 733.3 V688.8 A44.5 44.5 0 0 1 1492.8 733.3" fill="none" stroke="#5eacf2" stroke-width="1.2"/><path d="M1022 925 V972 A47 47 0 0 0 1069 925" fill="none" stroke="#5eacf2" stroke-width="1.2"/><path d="M1271.7 958 V1006 A48 48 0 0 0 1319.7 958" fill="none" stroke="#5eacf2" stroke-width="1.2"/><path d="M1366.7 958 V1006 A48 48 0 0 1 1318.7 958" fill="none" stroke="#5eacf2" stroke-width="1.2"/><path d="M1271.7 1026 V1053 M1366.7 1026 V1053" fill="none" stroke="#5eacf2" stroke-width="1.2"/><path d="M1319.7 1030 A48 48 0 0 1 1308 1053 M1318.7 1030 A48 48 0 0 0 1330.5 1053" fill="none" stroke="#5eacf2" stroke-width="1.2"/><path d="M1509.6 886.7 H1544" fill="none" stroke="#5eacf2" stroke-width="1.2"/><path d="M1509.6 940.8 Q1525 942 1544 930" fill="none" stroke="#5eacf2" stroke-width="1.2"/></g></svg>
<svg class="r" style="left:0;top:0;" width="1920" height="1080" viewBox="0 0 1920 1080"><path d="M1008.5 434.0 Q1011.2 431.0 1023.1 434.0 Q1026.0 430.6 1037.7 434.0 Q1041.1 430.1 1052.2 434.0 Q1056.4 429.5 1066.8 434.0 Q1072.0 428.9 1081.4 434.0 Q1087.9 428.6 1096.0 434.0 Q1104.1 428.6 1110.6 434.0 Q1120.0 428.9 1125.2 434.0 Q1135.6 429.5 1139.8 434.0 Q1150.9 430.1 1154.3 434.0 Q1166.0 430.6 1168.9 434.0 Q1180.8 431.0 1183.5 434.0 Q1192.1 432.3 1191.0 436.0 Q1198.7 436.4 1196.5 441.5 Q1202.6 443.2 1198.5 449.0 Q1203.8 454.8 1198.5 463.6 Q1203.9 470.1 1198.5 478.2 Q1204.0 485.5 1198.5 492.8 Q1203.9 500.9 1198.5 507.4 Q1203.8 516.2 1198.5 522.0 Q1202.6 527.8 1196.5 529.5 Q1198.7 534.6 1191.0 535.0 Q1192.1 538.7 1183.5 537.0 Q1180.8 540.0 1168.9 537.0 Q1166.0 540.4 1154.3 537.0 Q1150.9 540.9 1139.8 537.0 Q1135.6 541.5 1125.2 537.0 Q1120.0 542.1 1110.6 537.0 Q1104.1 542.4 1096.0 537.0 Q1087.9 542.4 1081.4 537.0 Q1072.0 542.1 1066.8 537.0 Q1056.4 541.5 1052.2 537.0 Q1041.1 540.9 1037.7 537.0 Q1026.0 540.4 1023.1 537.0 Q1011.2 540.0 1008.5 537.0 Q999.9 538.7 1001.0 535.0 Q993.3 534.6 995.5 529.5 Q989.4 527.8 993.5 522.0 Q988.2 516.2 993.5 507.4 Q988.1 500.9 993.5 492.8 Q988.0 485.5 993.5 478.2 Q988.1 470.1 993.5 463.6 Q988.2 454.8 993.5 449.0 Q989.4 443.2 995.5 441.5 Q993.3 436.4 1001.0 436.0 Q999.9 432.3 1008.5 434.0" fill="#fff" stroke="#ff8f8f" stroke-width="2" stroke-linejoin="miter"/><path d="M1100 540 L1142.2 620.7" stroke="#ff6060" stroke-width="1"/><rect x="1140" y="620.7" width="8" height="7.7" fill="#ff0000"/></svg>
<div class="t" style="left:1010.50px;top:453.17px;font-size:35px;line-height:35px;color:#151515;letter-spacing:1.6px;">Störung</div>
<div class="t" style="left:1010.50px;top:493.52px;font-size:21px;line-height:21px;color:#1a1a1a;letter-spacing:1.9px;">Hupe ist defekt</div>
<div class="t" style="left:1151.90px;top:632.44px;font-size:18.5px;line-height:18.5px;color:#111;transform:scaleX(1.0189);transform-origin:0 0;">000015</div>
<div class="t" style="left:1151.90px;top:653.94px;font-size:18.5px;line-height:18.5px;color:#111;transform:scaleX(1.0325);transform-origin:0 0;">Hupen, laut</div>
<svg class="r" style="left:0;top:0;" width="1920" height="1080" viewBox="0 0 1920 1080"><path d="M1147.9 631.4 L1178.5 662.2 L1148.1 695.6 L1099.3 742.2 L1067.4 711.1 Z" fill="#2fb9ef" fill-opacity="0.93" stroke="#2a4a6a" stroke-width="0.8"/><path d="M1116.3 663.7 L1148.1 695.6 M1126.7 674.8 L1077.8 705.9 L1099.3 742.2 M1137 685.2 L1099.3 742.2" fill="none" stroke="#2a3a4a" stroke-width="0.8"/><path d="M1178.5 662.2 L1148.1 695.6" stroke="#9a9a9a" stroke-width="1.2"/></svg>
<div class="r" style="left:961px;top:1028px;width:225px;height:7px;background:#000;"></div>
<div class="r" style="left:1007px;top:1029px;width:44px;height:5px;background:#fff;"></div>
<div class="r" style="left:1097px;top:1029px;width:43px;height:5px;background:#fff;"></div>
<div class="t" style="left:961.70px;top:1038.20px;font-size:13px;line-height:13px;color:#111;font-weight:700;">0 m</div>
<div class="t" style="left:1165.00px;top:1038.20px;font-size:13px;line-height:13px;color:#111;font-weight:700;">5 m</div>
<svg class="r" style="left:960px;top:1058px;" width="24" height="22" viewBox="0 0 24 22"><path d="M2.5 22 V14 Q2.5 8 7 8 Q11.5 8 11.5 14 V22" fill="#fff" stroke="#777" stroke-width="1.1"/><path d="M3 15.5 H11 V22 H3 Z" fill="#d6d6d6"/><path d="M2.5 15.5 H11.5 M7 8 V15.5" stroke="#777" stroke-width="1"/><path d="M7 8 Q8 4 11.5 4.5 Q14 5 14 9 Q14 13 17 13 Q20 13 20 9 V4.5" fill="none" stroke="#777" stroke-width="1.1"/></svg>
<div class="t" style="left:996.90px;top:1065.60px;font-size:13px;line-height:13px;color:#333;">21,30</div>
<div class="t" style="left:1070.30px;top:1065.60px;font-size:13px;line-height:13px;color:#333;">16,98</div>
<div class="r" style="left:1145px;top:1057px;width:1px;height:23px;background:#c8c8c8;"></div>
<div class="r" style="left:1544px;top:286px;width:1px;height:767px;background:#b5b5b5;"></div>
<div class="r" style="left:1545px;top:286px;width:303px;height:765px;background:#ffffff;"></div>
<div class="r" style="left:1545px;top:286px;width:1px;height:765px;background:#c8c8c8;"></div>
<div class="r" style="left:1545px;top:1050px;width:303px;height:1px;background:#c0c0c0;"></div>
<div class="r" style="left:1545px;top:286px;width:69px;height:1px;background:#c4c4c4;"></div>
<div class="r" style="left:1686px;top:286px;width:162px;height:1px;background:#b8b8b8;"></div>
<div class="r" style="left:1546px;top:261px;width:69px;height:25px;background:#e8e8e8;box-sizing:border-box;border:1px solid #c4c4c4;"></div>
<div class="r" style="left:1685px;top:261px;width:66px;height:25px;background:#e8e8e8;box-sizing:border-box;border:1px solid #c4c4c4;"></div>
<div class="r" style="left:1614px;top:259px;width:72px;height:29px;background:#ffffff;box-sizing:border-box;border:1px solid #c4c4c4;border-bottom:none;"></div>
<div class="t" style="left:1552.00px;top:267.75px;font-size:13px;line-height:13px;color:#222;transform:scaleX(1.0159);transform-origin:0 0;">Ansichten</div>
<div class="t" style="left:1621.75px;top:267.00px;font-size:13px;line-height:13px;color:#222;transform:scaleX(1.0321);transform-origin:0 0;">Objekte</div>
<div class="t" style="left:1689.25px;top:267.75px;font-size:13px;line-height:13px;color:#222;transform:scaleX(1.0115);transform-origin:0 0;">Stempel</div>
<svg class="r" style="left:1851px;top:259px;" width="24" height="24" viewBox="0 0 24 24"><circle cx="12" cy="12" r="10.2" fill="#fff" stroke="#333" stroke-width="1.4"/><path d="M10 8 L14 12 L10 16" fill="none" stroke="#222" stroke-width="2"/></svg>
<div class="t" style="left:1819px;top:311px;width:90px;height:16px;font-size:13px;line-height:16px;color:#333;text-align:center;transform:rotate(-90deg);">Werkzeuge</div>
<div class="t" style="left:1558.75px;top:304.00px;font-size:13px;line-height:13px;color:#333;font-weight:700;">Verknüpfungen</div>
<svg class="r" style="left:1553.6px;top:337.5px;" width="24" height="24" viewBox="0 0 24 24"><circle cx="12" cy="12" r="10.2" fill="#fff" stroke="#333" stroke-width="1.4"/><path transform="translate(12 12.3)" d="M-4.2 -2 L0 2.2 L4.2 -2" fill="none" stroke="#222" stroke-width="2"/></svg>
<div class="t" style="left:1581.50px;top:343.25px;font-size:13px;line-height:13px;color:#222;">Raum</div>
<svg class="r" style="left:1553.6px;top:366.75px;" width="24" height="24" viewBox="0 0 24 24"><circle cx="12" cy="12" r="10.2" fill="#fff" stroke="#333" stroke-width="1.4"/><path transform="translate(12 12.3)" d="M-4.2 -2 L0 2.2 L4.2 -2" fill="none" stroke="#222" stroke-width="2"/></svg>
<div class="t" style="left:1581.50px;top:374.00px;font-size:13px;line-height:13px;color:#222;">Ereignisse</div>
<svg class="r" style="left:1553.6px;top:395px;" width="24" height="24" viewBox="0 0 24 24"><circle cx="12" cy="12" r="10.2" fill="#fff" stroke="#333" stroke-width="1.4"/><path transform="translate(12 12.3)" d="M-4.2 2.2 L0 -2 L4.2 2.2" fill="none" stroke="#222" stroke-width="2"/></svg>
<div class="t" style="left:1581.50px;top:402.00px;font-size:13px;line-height:13px;color:#222;">Anlage</div>
<svg class="r" style="left:1553.6px;top:699.5px;" width="24" height="24" viewBox="0 0 24 24"><circle cx="12" cy="12" r="10.2" fill="#fff" stroke="#333" stroke-width="1.4"/><path transform="translate(12 12.3)" d="M-4.2 -2 L0 2.2 L4.2 -2" fill="none" stroke="#222" stroke-width="2"/></svg>
<div class="t" style="left:1581.50px;top:705.90px;font-size:13px;line-height:13px;color:#222;">Inventar</div>
<svg class="r" style="left:1553.6px;top:727.8px;" width="24" height="24" viewBox="0 0 24 24"><circle cx="12" cy="12" r="10.2" fill="#fff" stroke="#333" stroke-width="1.4"/><path transform="translate(12 12.3)" d="M-4.2 -2 L0 2.2 L4.2 -2" fill="none" stroke="#222" stroke-width="2"/></svg>
<div class="t" style="left:1581.50px;top:734.00px;font-size:13px;line-height:13px;color:#222;">Personal</div>
<svg class="r" style="left:1553.6px;top:755.9px;" width="24" height="24" viewBox="0 0 24 24"><circle cx="12" cy="12" r="10.2" fill="#fff" stroke="#333" stroke-width="1.4"/><path transform="translate(12 12.3)" d="M-4.2 -2 L0 2.2 L4.2 -2" fill="none" stroke="#222" stroke-width="2"/></svg>
<div class="t" style="left:1581.50px;top:762.00px;font-size:13px;line-height:13px;color:#222;">Zylindereinbau</div>
<svg class="r" style="left:1553.6px;top:783.7px;" width="24" height="24" viewBox="0 0 24 24"><circle cx="12" cy="12" r="10.2" fill="#fff" stroke="#333" stroke-width="1.4"/><path transform="translate(12 12.3)" d="M-4.2 -2 L0 2.2 L4.2 -2" fill="none" stroke="#222" stroke-width="2"/></svg>
<div class="t" style="left:1581.50px;top:790.00px;font-size:13px;line-height:13px;color:#222;">Anmerkung</div>
<div class="r" style="left:1554px;top:419px;width:279px;height:24px;background:#efefef;box-sizing:border-box;border:1px solid #bdbdbd;"></div>
<div class="t" style="left:1558.75px;top:425.25px;font-size:13px;line-height:13px;color:#333;">Standard</div>
<svg class="r" style="left:1819px;top:428px;" width="10" height="8" viewBox="0 0 10 8"><path d="M1 1.5 H9 L5 6 Z" fill="#888"/></svg>
<div class="r" style="left:1554px;top:443px;width:279px;height:251px;background:#ffffff;box-sizing:border-box;border:1px solid #a9a9a9;"></div>
<div class="r" style="left:1555px;top:444px;width:277px;height:31px;background:#efefef;"></div>
<div class="r" style="left:1555px;top:475px;width:277px;height:1px;background:#b9b9b9;"></div>
<div class="r" style="left:1583px;top:444px;width:1px;height:31px;background:#c4c4c4;"></div>
<div class="r" style="left:1583px;top:475px;width:1px;height:199px;background:#e2e2e2;"></div>
<div class="r" style="left:1655px;top:444px;width:1px;height:31px;background:#c4c4c4;"></div>
<div class="r" style="left:1655px;top:475px;width:1px;height:199px;background:#e2e2e2;"></div>
<div class="r" style="left:1795px;top:444px;width:1px;height:31px;background:#c4c4c4;"></div>
<div class="r" style="left:1795px;top:475px;width:1px;height:199px;background:#e2e2e2;"></div>
<div class="t" style="left:1585.40px;top:453.60px;font-size:13px;line-height:13px;color:#333;">Anlagen-ID</div>
<div class="t" style="left:1658.00px;top:453.60px;font-size:13px;line-height:13px;color:#333;transform:scaleX(0.9961);transform-origin:0 0;">Anlagenbez.</div>
<div class="r" style="left:1796px;top:448px;width:36px;height:22px;overflow:hidden;"><div class="t" style="left:3px;top:5.5px;font-size:13px;line-height:13px;color:#333;">Parent</div></div>
<div class="r" style="left:1583px;top:475px;width:1px;height:25px;background:#e0e0e0;"></div>
<div class="r" style="left:1655px;top:475px;width:1px;height:25px;background:#e0e0e0;"></div>
<div class="r" style="left:1795px;top:475px;width:1px;height:25px;background:#e0e0e0;"></div>
<svg class="r" style="left:1560px;top:480px;" width="20" height="18" viewBox="0 0 20 18"><circle cx="7.5" cy="7" r="5.8" fill="none" stroke="#9a9a9a" stroke-width="1.2"/><path d="M11.6 11.2 L17 16.2" stroke="#9a9a9a" stroke-width="1.4"/></svg>
<div class="t" style="left:1588.00px;top:483.30px;font-size:13px;line-height:13px;color:#333;">000011</div>
<div class="t" style="left:1660.00px;top:483.30px;font-size:13px;line-height:13px;color:#333;">Signalgeber</div>
<div class="r" style="left:1555px;top:500px;width:277px;height:25px;background:#efefef;"></div>
<div class="r" style="left:1583px;top:500px;width:1px;height:25px;background:#e0e0e0;"></div>
<div class="r" style="left:1655px;top:500px;width:1px;height:25px;background:#e0e0e0;"></div>
<div class="r" style="left:1795px;top:500px;width:1px;height:25px;background:#e0e0e0;"></div>
<svg class="r" style="left:1560px;top:505px;" width="20" height="18" viewBox="0 0 20 18"><circle cx="7.5" cy="7" r="5.8" fill="none" stroke="#9a9a9a" stroke-width="1.2"/><path d="M11.6 11.2 L17 16.2" stroke="#9a9a9a" stroke-width="1.4"/></svg>
<div class="t" style="left:1588.00px;top:508.15px;font-size:13px;line-height:13px;color:#333;">000014</div>
<div class="t" style="left:1660.00px;top:508.15px;font-size:13px;line-height:13px;color:#333;">Signalgeber, akustisch</div>
<div class="r" style="left:1583px;top:525px;width:1px;height:25px;background:#e0e0e0;"></div>
<div class="r" style="left:1655px;top:525px;width:1px;height:25px;background:#e0e0e0;"></div>
<div class="r" style="left:1795px;top:525px;width:1px;height:25px;background:#e0e0e0;"></div>
<svg class="r" style="left:1560px;top:530px;" width="20" height="18" viewBox="0 0 20 18"><circle cx="7.5" cy="7" r="5.8" fill="none" stroke="#9a9a9a" stroke-width="1.2"/><path d="M11.6 11.2 L17 16.2" stroke="#9a9a9a" stroke-width="1.4"/></svg>
<div class="t" style="left:1588.00px;top:533.00px;font-size:13px;line-height:13px;color:#333;">000015</div>
<div class="t" style="left:1660.00px;top:533.00px;font-size:13px;line-height:13px;color:#333;">Hupen, laut</div>
<div class="r" style="left:1555px;top:550px;width:277px;height:24px;background:#efefef;"></div>
<div class="r" style="left:1583px;top:550px;width:1px;height:24px;background:#e0e0e0;"></div>
<div class="r" style="left:1655px;top:550px;width:1px;height:24px;background:#e0e0e0;"></div>
<div class="r" style="left:1795px;top:550px;width:1px;height:24px;background:#e0e0e0;"></div>
<svg class="r" style="left:1560px;top:555px;" width="20" height="18" viewBox="0 0 20 18"><circle cx="7.5" cy="7" r="5.8" fill="none" stroke="#9a9a9a" stroke-width="1.2"/><path d="M11.6 11.2 L17 16.2" stroke="#9a9a9a" stroke-width="1.4"/></svg>
<div class="t" style="left:1588.00px;top:557.85px;font-size:13px;line-height:13px;color:#333;">000024</div>
<div class="t" style="left:1660.00px;top:557.85px;font-size:13px;line-height:13px;color:#333;">Hupen, laut</div>
<div class="r" style="left:1583px;top:574px;width:1px;height:25px;background:#e0e0e0;"></div>
<div class="r" style="left:1655px;top:574px;width:1px;height:25px;background:#e0e0e0;"></div>
<div class="r" style="left:1795px;top:574px;width:1px;height:25px;background:#e0e0e0;"></div>
<svg class="r" style="left:1560px;top:579px;" width="20" height="18" viewBox="0 0 20 18"><circle cx="7.5" cy="7" r="5.8" fill="none" stroke="#9a9a9a" stroke-width="1.2"/><path d="M11.6 11.2 L17 16.2" stroke="#9a9a9a" stroke-width="1.4"/></svg>
<div class="t" style="left:1588.00px;top:582.70px;font-size:13px;line-height:13px;color:#333;">000025</div>
<div class="t" style="left:1660.00px;top:582.70px;font-size:13px;line-height:13px;color:#333;">Signalgeber</div>
<div class="r" style="left:1555px;top:599px;width:277px;height:25px;background:#efefef;"></div>
<div class="r" style="left:1583px;top:599px;width:1px;height:25px;background:#e0e0e0;"></div>
<div class="r" style="left:1655px;top:599px;width:1px;height:25px;background:#e0e0e0;"></div>
<div class="r" style="left:1795px;top:599px;width:1px;height:25px;background:#e0e0e0;"></div>
<svg class="r" style="left:1560px;top:604px;" width="20" height="18" viewBox="0 0 20 18"><circle cx="7.5" cy="7" r="5.8" fill="none" stroke="#9a9a9a" stroke-width="1.2"/><path d="M11.6 11.2 L17 16.2" stroke="#9a9a9a" stroke-width="1.4"/></svg>
<div class="t" style="left:1588.00px;top:607.55px;font-size:13px;line-height:13px;color:#333;">000030</div>
<div class="t" style="left:1660.00px;top:607.55px;font-size:13px;line-height:13px;color:#333;">Fenster mit Symbol</div>
<div class="r" style="left:1583px;top:624px;width:1px;height:25px;background:#e0e0e0;"></div>
<div class="r" style="left:1655px;top:624px;width:1px;height:25px;background:#e0e0e0;"></div>
<div class="r" style="left:1795px;top:624px;width:1px;height:25px;background:#e0e0e0;"></div>
<svg class="r" style="left:1560px;top:629px;" width="20" height="18" viewBox="0 0 20 18"><circle cx="7.5" cy="7" r="5.8" fill="none" stroke="#9a9a9a" stroke-width="1.2"/><path d="M11.6 11.2 L17 16.2" stroke="#9a9a9a" stroke-width="1.4"/></svg>
<div class="t" style="left:1588.00px;top:632.40px;font-size:13px;line-height:13px;color:#333;">000035</div>
<div class="t" style="left:1660.00px;top:632.40px;font-size:13px;line-height:13px;color:#333;">Signalgeber</div>
<div class="r" style="left:1555px;top:649px;width:277px;height:25px;background:#efefef;"></div>
<div class="r" style="left:1583px;top:649px;width:1px;height:25px;background:#e0e0e0;"></div>
<div class="r" style="left:1655px;top:649px;width:1px;height:25px;background:#e0e0e0;"></div>
<div class="r" style="left:1795px;top:649px;width:1px;height:25px;background:#e0e0e0;"></div>
<svg class="r" style="left:1560px;top:654px;" width="20" height="18" viewBox="0 0 20 18"><circle cx="7.5" cy="7" r="5.8" fill="none" stroke="#9a9a9a" stroke-width="1.2"/><path d="M11.6 11.2 L17 16.2" stroke="#9a9a9a" stroke-width="1.4"/></svg>
<div class="t" style="left:1588.00px;top:657.25px;font-size:13px;line-height:13px;color:#333;">000038</div>
<div class="t" style="left:1660.00px;top:657.25px;font-size:13px;line-height:13px;color:#333;">Wecker allgemein</div>
<svg class="r" style="left:1561px;top:678px;" width="9" height="11" viewBox="0 0 9 11"><path d="M7.5 1 L1.5 5.5 L7.5 10 Z" fill="#777"/></svg>
<div class="r" style="left:1575px;top:679px;width:59px;height:10px;background:#bdbdbd;"></div>
<svg class="r" style="left:1819px;top:678px;" width="9" height="11" viewBox="0 0 9 11"><path d="M1.5 1 L7.5 5.5 L1.5 10 Z" fill="#777"/></svg>
<div class="r" style="left:1882px;top:192px;width:7px;height:888px;background:#d6e1ea;"></div>
<div class="r" style="left:1888px;top:190px;width:31px;height:890px;background:#405578;"></div>
<div class="r" style="left:1890px;top:165px;width:25px;height:91px;background:#f4f4f4;"></div>
<div class="r" style="left:1914px;top:165px;width:4px;height:91px;background:#bdbdbd;"></div>
<div class="t" style="left:1862px;top:194px;width:80px;height:16px;font-size:13px;line-height:16px;color:#333;text-align:center;transform:rotate(-90deg);">Favoriten</div>
<svg class="r" style="left:1893px;top:237px;" width="18" height="14" viewBox="0 0 18 14"><path d="M1.5 1 V12.5 M16.5 1 V12.5" stroke="#aaa"/><path d="M4 4 H13 V11 L8.5 8.5 L4 11 Z" fill="none" stroke="#aaa"/><circle cx="8.5" cy="6.5" r="1.5" fill="#e8c95a"/></svg>
<div class="r" style="left:0px;top:57px;width:1px;height:1023px;background:#ffffff;"></div>
</body></html>
